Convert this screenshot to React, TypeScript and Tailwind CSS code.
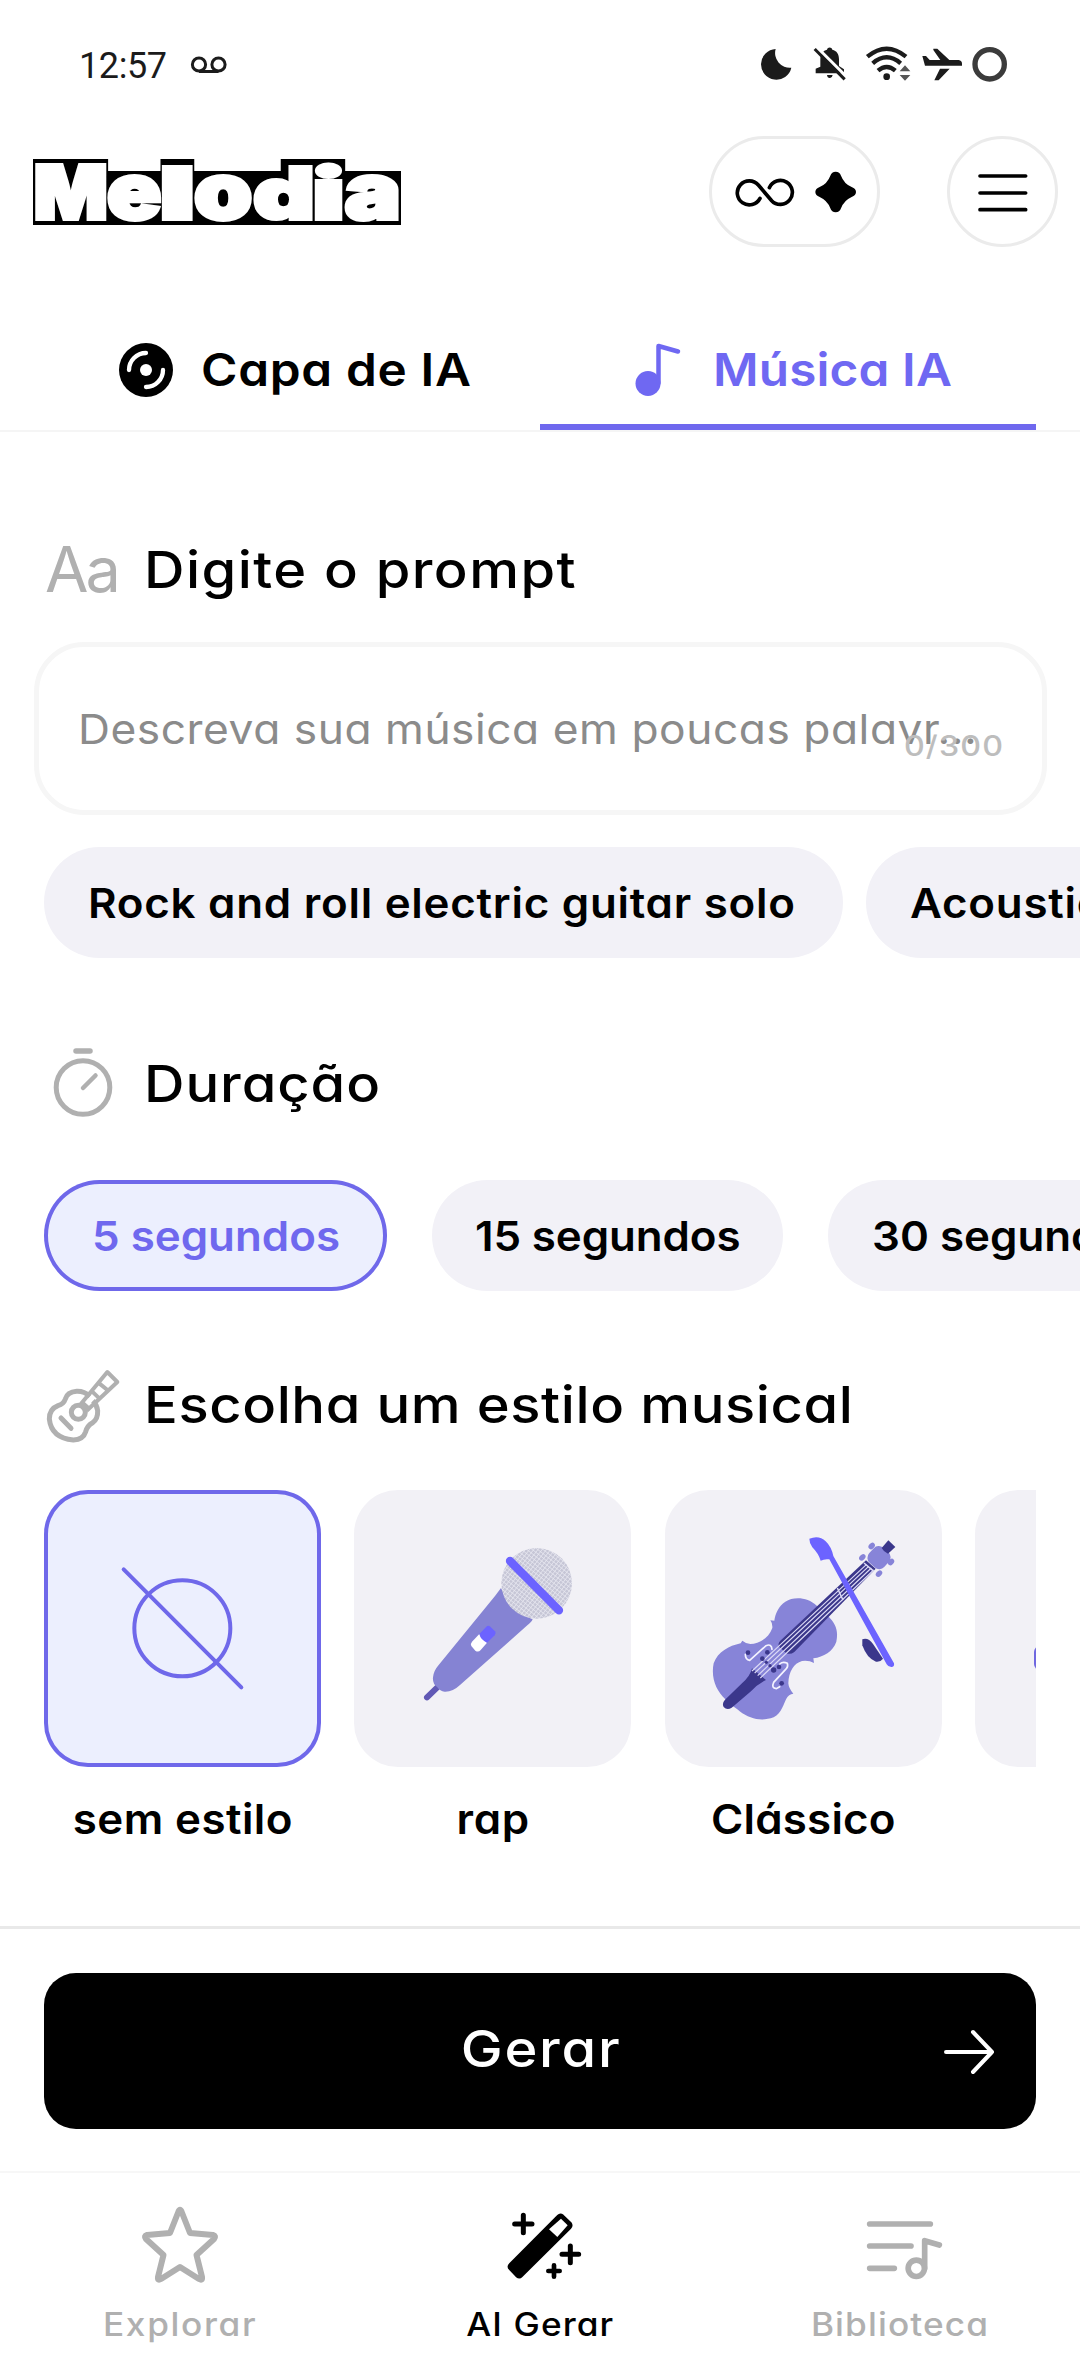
import type { ReactNode } from "react";

const wide = "inline-block whitespace-nowrap [font-feature-settings:'cv11']";

function StatusBar() {
  return (
    <div className="flex h-[136px] items-start pl-[79px] pr-[70px] text-[#1b1b1b]">
      <span className="mt-[42px] w-[89px] font-[Roboto] text-[36px] leading-[48px] tracking-[-0.4px]">12:57</span>
      <svg className="ml-[22px] mt-[54px] h-[22px] w-[38px]" viewBox="190 54 38 22" fill="none" stroke="currentColor" strokeWidth="3">
        <circle cx="199" cy="64.500" r="6.600" />
        <circle cx="218.500" cy="64.500" r="6.600" />
        <path d="M199 71.500H218.500" />
      </svg>
      <svg className="ml-auto mt-[45px] h-[38px] w-[250px]" viewBox="240 75 750 114" fill="currentColor">
        <path d="M287 87A46 46 0 1 0 334 143A44 44 0 0 1 287 87Z" />
        <path d="M421 140V118C421 100 430 92 441 89C443 80 455 80 457 89C470 92 477 102 477 118V138L492 148V160H407V146ZM441 165H458Q456 175 449 174Q442 174 441 165Z" />
        <path d="M411 82L502 173" stroke="#fff" strokeWidth="9" />
        <path d="M404 87L494 178" stroke="currentColor" strokeWidth="9" />
        <g fill="none" stroke="currentColor" strokeWidth="13">
          <path d="M562 110Q620 62 678 110" />
          <path d="M578 130Q620 94 662 130" />
          <path d="M594 152Q620 130 646 152" />
        </g>
        <circle cx="620" cy="170" r="10" />
        <path d="M675 136L691 154H659ZM675 182L691 165H659Z" fill="#555" />
        <path d="M727 108H738L749 120H781L760 90V86H772L808 120H836Q846 122 846 131V137H735ZM780 146H809L776 181H763Z" />
        <circle cx="929" cy="133" r="44" fill="none" stroke="#3b3b3b" strokeWidth="16" />
      </svg>
    </div>
  );
}

// Each letter fills a block; left and right are its side bearings as a share of the advance.
const logoLetters = [
  { ch: "M", x: 106, w: 199, left: 0.065, right: 0.065, size: 222 },
  { ch: "e", x: 313, w: 154, left: 0.05, right: 0.05, size: 232 },
  { ch: "l", x: 473, w: 83, left: 0.16, right: 0.16, size: 214 },
  { ch: "o", x: 566, w: 164, left: 0.05, right: 0.05, size: 232 },
  { ch: "d", x: 738, w: 166, left: 0.05, right: 0.085, size: 214 },
  { ch: "i", x: 914, w: 79, left: 0.14, right: 0.14, size: 210 },
  { ch: "a", x: 1002, w: 155, left: 0.045, right: 0.075, size: 232 },
];

function Logo() {
  return (
    <svg className="h-[66px] w-[368px] overflow-visible" viewBox="96 414 1068 198" preserveAspectRatio="none">
      <path d="M96 414H314V450H466V414H564V450H815V414H1002V450H1164V612H96Z" />
      {logoLetters.map((l) => {
        const length = (l.w - 12) / (1 - l.left - l.right);
        return (
          <text
            key={l.ch}
            x={l.x + 6 - l.left * length}
            y={594}
            textLength={length}
            lengthAdjust="spacingAndGlyphs"
            fontFamily="Inter"
            fontWeight="900"
            fontSize={l.size}
            fill="#fff"
            stroke="#fff"
            strokeWidth="12"
            strokeLinejoin="miter"
          >
            {l.ch}
          </text>
        );
      })}
    </svg>
  );
}

function Header() {
  return (
    <header className="flex h-[111px] items-center pl-[33px] pr-[22px]">
      <Logo />
      <button className="ml-auto flex h-[111px] w-[171px] items-center justify-center rounded-full border-[3px] border-[#ebebeb]">
        <svg className="h-[44px] w-[124px]" viewBox="158 448 372 132">
          <path
            d="M239 533A36 36 0 1 1 234 493L274 540A36 36 0 1 0 267 501"
            fill="none"
            stroke="#000"
            strokeWidth="11"
            strokeLinecap="round"
          />
          <path d="M466 453Q478 453 482 465Q491 489 514 499Q527 504 527 514Q527 524 514 529Q491 539 482 563Q478 575 466 575Q454 575 450 563Q441 539 418 529Q405 524 405 514Q405 504 418 499Q441 489 450 465Q454 453 466 453Z" />
        </svg>
      </button>
      <button className="ml-[67px] flex size-[111px] items-center justify-center rounded-full border-[3px] border-[#ebebeb]">
        <svg className="h-[43px] w-[52px]" viewBox="890 450 156 129" stroke="#000" strokeWidth="11" strokeLinecap="round">
          <path d="M899 468H1036M899 519H1036M899 569H1036" />
        </svg>
      </button>
    </header>
  );
}

function Tabs() {
  return (
    <nav className="flex h-[185px] border-b-2 border-[#f5f5f5] px-11 text-[45px] font-semibold leading-[60px]">
      <div className="flex w-[496px] items-center pl-[75px] pt-[62px]">
        <svg className="size-[54px] shrink-0" viewBox="57 36 162 162">
          <circle cx="138" cy="117" r="81" />
          <circle cx="138" cy="117" r="18" fill="#fff" />
          <path d="M138 66A51 51 0 0 0 87 117M189 117A51 51 0 0 1 138 168" fill="none" stroke="#fff" strokeWidth="13" strokeLinecap="round" />
        </svg>
        <span className={`${wide} ml-7 origin-left scale-x-110 tracking-[0.6px]`}>Capa de IA</span>
      </div>
      <div className="relative flex w-[496px] items-center pl-[95px] pt-[62px] text-[#6f68f2]">
        <svg className="h-[54px] w-[46px] shrink-0" viewBox="634 343 46 54">
          <circle cx="647" cy="383.500" r="12.500" fill="currentColor" />
          <path d="M657.500 383V346L677 351.500" fill="none" stroke="currentColor" strokeWidth="4.500" strokeLinecap="round" strokeLinejoin="round" />
        </svg>
        <span className={`${wide} ml-8 origin-left scale-x-110 tracking-[0.1px]`}>Música IA</span>
        <div className="absolute inset-x-0 bottom-0 h-[6px] bg-[#6f68ee]" />
      </div>
    </nav>
  );
}

function Heading({ icon, children, className }: { icon: ReactNode; children: ReactNode; className: string }) {
  return (
    <div className={`flex h-[74px] items-center gap-[22px] pl-11 text-[51px] font-medium leading-[74px] ${className}`}>
      <div className="flex h-[74px] w-[78px] shrink-0 items-center text-[#b0b0b0]">{icon}</div>
      <h2 className={`${wide} origin-left scale-x-110 pt-[2px]`}>{children}</h2>
    </div>
  );
}

function Chip({ children, className }: { children: ReactNode; className: string }) {
  return (
    <div className={`flex h-[111px] shrink-0 items-center rounded-full text-[41px] font-semibold leading-[60px] ${className}`}>
      <span className={`${wide} origin-left scale-x-107`}>{children}</span>
    </div>
  );
}

function Stopwatch() {
  return (
    <svg className="h-[74px] w-[78px]" viewBox="44 1046 78 74" fill="none" stroke="currentColor" strokeWidth="5" strokeLinecap="round">
      <circle cx="83" cy="1087.500" r="26.800" />
      <path d="M76 1051H90" strokeWidth="5.500" />
      <path d="M83 1088L95.500 1075.500" strokeWidth="4.500" />
    </svg>
  );
}

function Guitar() {
  return (
    <svg className="h-[74px] w-[78px] overflow-visible" viewBox="42 51 234 222" fill="none" stroke="currentColor" strokeWidth="15" strokeLinejoin="round">
      <path d="M180 139Q162 123 140 124Q112 126 106 147Q101 162 84 167Q58 177 58 207Q64 264 130 270Q160 268 167 245Q172 226 188 218Q204 207 203 182Q201 164 189 152" />
      <circle cx="145" cy="187" r="21" />
      <path d="M150 165L232 66L262 96L170 182M155 156L181 179M183 121L211 148M204 97L236 123" strokeWidth="12" />
      <path d="M93 204L123 235" strokeLinecap="round" />
    </svg>
  );
}

function NoStyleArt() {
  return (
    <svg className="size-full" viewBox="42 60 831 831" fill="none" stroke="#6f68ea" strokeWidth="12" strokeLinecap="round">
      <circle cx="457" cy="475" r="144" />
      <path d="M281 298L634 652" />
    </svg>
  );
}

function MicArt() {
  return (
    <svg className="size-full" viewBox="12 60 831 831">
      <defs>
        <pattern id="mesh" width="10" height="10" patternUnits="userSpaceOnUse" patternTransform="rotate(38)">
          <rect width="10" height="10" fill="#c6c6d6" />
          <path d="M0 0H10M0 0V10" stroke="#e9e9f2" strokeWidth="4" />
        </pattern>
      </defs>
      <path d="M262 652L231 682" stroke="#6159b5" strokeWidth="18" strokeLinecap="round" />
      <path d="M453 354C475 400 500 430 548 448C545 455 540 460 532 466L330 645Q308 666 284 665Q270 664 262 652Q247 642 249 622Q251 602 266 585L435 378Z" fill="#8583d3" />
      <circle cx="560" cy="340" r="106" fill="url(#mesh)" />
      <path d="M480 273L627 421" stroke="#6c63ff" strokeWidth="25" strokeLinecap="round" />
      <path d="M366 515L388 492L411 518L392 540Q385 548 376 542L364 528Q360 522 366 515Z" fill="#fff" />
      <path d="M388 492L409 470Q415 465 421 470L435 484Q440 490 434 496L411 518Q392 510 388 492Z" fill="#6c63ff" />
    </svg>
  );
}

function ViolinArt() {
  return (
    <svg className="size-full" viewBox="44 60 831 831">
      <path
        d="M500 408C470 380 430 380 405 395C385 408 375 430 372 452L360 451Q367 460 366 474C355 505 325 522 300 522Q285 520 276 512L271 520C235 528 203 545 190 580C181 625 198 662 225 688C240 705 255 712 268 724C300 748 335 755 370 742C395 728 400 700 408 686Q415 673 429 671Q415 655 414 640C415 605 430 580 455 573Q475 570 491 579L489 565C520 560 548 545 558 515C565 480 555 460 533 438Z"
        fill="#8784d8"
      />
      <path d="M647 271L676 296L432 546Q418 556 406 548L388 532Q380 522 390 512Z" fill="#3b378b" />
      <path d="M305 595L347 630Q322 642 302 664L244 713Q230 722 220 711Q214 700 224 689L275 640Q300 618 305 595Z" fill="#3b378b" />
      <g stroke="#dcdaf6" strokeWidth="3.500">
        <path d="M648 284L305 603M655 289L313 609M663 294L322 617M670 300L330 624" />
        <path d="M641 279L668 302M561 354L578 390" strokeWidth="4.500" />
      </g>
      <rect x="656" y="232" width="61" height="61" rx="20" transform="rotate(42 686 262)" fill="#8784d8" />
      <path d="M714 211L735 231L713 251Q700 246 694 234Z" fill="#3b378b" />
      <g fill="#8784d8">
        <ellipse cx="664" cy="228" rx="8" ry="11" transform="rotate(45 664 228)" />
        <ellipse cx="636" cy="262" rx="8" ry="11" transform="rotate(45 636 262)" />
        <ellipse cx="722" cy="276" rx="8" ry="11" transform="rotate(45 722 276)" />
        <ellipse cx="686" cy="311" rx="8" ry="11" transform="rotate(45 686 311)" />
      </g>
      <path d="M636 508Q654 502 668 522L698 566Q690 577 677 575Q650 566 636 526Z" fill="#3b378b" />
      <path d="M477 206Q506 194 526 214Q543 230 549 258L731 580Q733 589 725 591Q714 592 709 583L537 268Q522 266 511 272Q504 250 486 232Q477 220 477 206Z" fill="#6c63ff" />
      <g fill="none" stroke="#f4f3ff" strokeWidth="5" strokeLinecap="round">
        <path d="M285 553Q285 570 298 571L347 527Q364 520 365 538" />
        <path d="M388 582Q398 573 411 580Q414 590 408 596L370 637Q362 655 378 656L388 650" />
      </g>
      <g fill="#3b378b">
        <circle cx="293" cy="548" r="7" />
        <circle cx="351" cy="547" r="7" />
        <circle cx="386" cy="591" r="7" />
        <circle cx="394" cy="640" r="7" />
        <circle cx="336" cy="566" r="7" />
        <circle cx="370" cy="600" r="8" />
        <circle cx="348" cy="577" r="5" />
        <circle cx="359" cy="587" r="5" />
      </g>
    </svg>
  );
}

function NextArt() {
  return (
    <svg className="size-full" viewBox="972 60 831 831">
      <rect x="1149" y="528" width="480" height="72" rx="18" fill="#7068e0" />
    </svg>
  );
}

function StyleCard({ art, label, selected }: { art: ReactNode; label: ReactNode; selected?: boolean }) {
  return (
    <div className="flex w-[277px] shrink-0 flex-col items-center">
      <div
        className={`size-[277px] rounded-[44px] ${selected ? "bg-[#eceffe] ring-4 ring-inset ring-[#6f68ea]" : "bg-[#f2f1f6]"}`}
      >
        {art}
      </div>
      <div className="mt-[27px] h-[50px] text-[41px] font-semibold leading-[50px]">{label}</div>
    </div>
  );
}

function BottomNav() {
  return (
    <nav className="grid grid-cols-3 border-t-2 border-[#f7f7f7] pt-[29px] text-[32px] font-medium leading-[52px] text-[#b0b0b0]">
      <div className="flex flex-col items-center gap-[13px]">
        <svg className="size-[84px]" viewBox="0 0 84 84" fill="none" stroke="currentColor" strokeWidth="6" strokeLinejoin="round">
          <path d="M40.500 9.500Q42 6 43.500 9.500L52 31L75 33Q78.500 34 76 37L58.500 53L64 75Q64.500 79 61 77L42 65L23 77Q19.500 79 20 75L25.500 53L8 37Q5.500 34 9 33L32 31Z" />
        </svg>
        <span className={`${wide} scale-x-110 tracking-[1.5px]`}>Explorar</span>
      </div>
      <div className="flex flex-col items-center gap-[13px] text-black">
        <svg className="size-[84px]" viewBox="54 36 252 252" stroke="currentColor" strokeLinecap="round" strokeLinejoin="round">
          <path d="M236 79Q241 74 247 79L269 100Q274 106 269 112L123 257Q118 262 112 257L92 236Q86 230 92 224Z" fill="currentColor" strokeWidth="12" />
          <path d="M243 86L263 106L232 141L207 118Z" fill="#fff" stroke="none" />
          <path d="M130 76V128M104 102H156M271 168V218M246 193H296" strokeWidth="15" />
          <path d="M222 226V260M205 243H239" strokeWidth="14" />
        </svg>
        <span className={`${wide} scale-x-110 tracking-[1px]`}>AI Gerar</span>
      </div>
      <div className="flex flex-col items-center gap-[13px]">
        <svg className="size-[84px] overflow-visible" viewBox="1134 36 252 252" fill="none" stroke="currentColor" strokeWidth="17" strokeLinecap="round" strokeLinejoin="round">
          <path d="M1169 102H1351M1169 168H1293M1169 235H1243" />
          <circle cx="1309" cy="235" r="24.500" />
          <path d="M1334 235V152L1378 165" />
        </svg>
        <span className={`${wide} scale-x-110 tracking-[1px]`}>Biblioteca</span>
      </div>
    </nav>
  );
}

export default function App() {
  return (
    <div className="flex h-[2376px] w-[1080px] flex-col overflow-hidden bg-white font-[Inter,sans-serif] text-black">
      <StatusBar />
      <Header />
      <Tabs />

      <Heading
        className="mt-[100px] tracking-[1.3px]"
        icon={<span className="pl-px text-[63px] font-normal leading-[74px] tracking-[-3px]">Aa</span>}
      >
        Digite o prompt
      </Heading>
      <div className="relative ml-[34px] mt-9 flex h-[173px] w-[1013px] items-center rounded-[50px] border-[5px] border-[#f6f6f6] pl-[39px]">
        <span className={`${wide} origin-left scale-x-108 text-[41px] leading-[60px] tracking-[0.5px] text-[#8b8b8b]`}>
          Descreva sua música em poucas palavr...
        </span>
        <span className="absolute right-[38px] top-[79px] origin-right scale-x-115 text-[28px] font-medium leading-[40px] tracking-[1px] text-[#bdbdbd]">
          0/300
        </span>
      </div>
      <div className="mt-8 flex gap-[23px] overflow-hidden pl-11">
        <Chip className="w-[799px] bg-[#f2f1f7] pl-[44px] tracking-[0.7px]">Rock and roll electric guitar solo</Chip>
        <Chip className="w-[500px] bg-[#f2f1f7] pl-[44px] tracking-[0.7px]">Acoustic guitar</Chip>
      </div>

      <Heading className="mt-[88px] tracking-[0.85px]" icon={<Stopwatch />}>
        Duração
      </Heading>
      <div className="mt-[60px] flex gap-[45px] overflow-hidden pl-11">
        <Chip className="w-[343px] bg-[#eceffe] pl-[48px] text-[#6f68ee] ring-4 ring-inset ring-[#6f68ea]">5 segundos</Chip>
        <Chip className="w-[351px] bg-[#f2f1f7] pl-[43px] tracking-[-0.1px]">15 segundos</Chip>
        <Chip className="w-[352px] bg-[#f2f1f7] pl-[44px]">30 segundos</Chip>
      </div>

      <Heading className="mt-[76px] tracking-[0.53px]" icon={<Guitar />}>
        Escolha um estilo musical
      </Heading>
      <div className="mx-11 mt-[49px] flex gap-[33.4px] overflow-hidden">
        <StyleCard selected art={<NoStyleArt />} label={<span className={`${wide} scale-x-107 tracking-[0.4px]`}>sem estilo</span>} />
        <StyleCard art={<MicArt />} label={<span className={`${wide} scale-x-107 tracking-[0.6px]`}>rap</span>} />
        <StyleCard art={<ViolinArt />} label={<span className={`${wide} scale-x-107 tracking-[0.2px]`}>Clássico</span>} />
        <StyleCard art={<NextArt />} label={null} />
      </div>

      <div className="mt-[82px] border-t-[3px] border-[#e9e9e9] px-11 pb-[42px] pt-11">
        <button className="grid h-[156px] w-full grid-cols-[1fr_auto_1fr] items-center rounded-[32px] bg-black pr-[41px] text-white">
          <span />
          <span className={`${wide} -mt-1 ml-[43px] scale-x-110 text-[51px] font-medium leading-[70px] tracking-[1.6px]`}>Gerar</span>
          <svg className="mt-[2px] h-[46px] w-[52px] justify-self-end" viewBox="0 0 52 46" fill="none" stroke="currentColor" strokeWidth="4" strokeLinecap="round" strokeLinejoin="round">
            <path d="M3 23H49M30 3L49 23L30 43" />
          </svg>
        </button>
      </div>
      <BottomNav />
    </div>
  );
}
